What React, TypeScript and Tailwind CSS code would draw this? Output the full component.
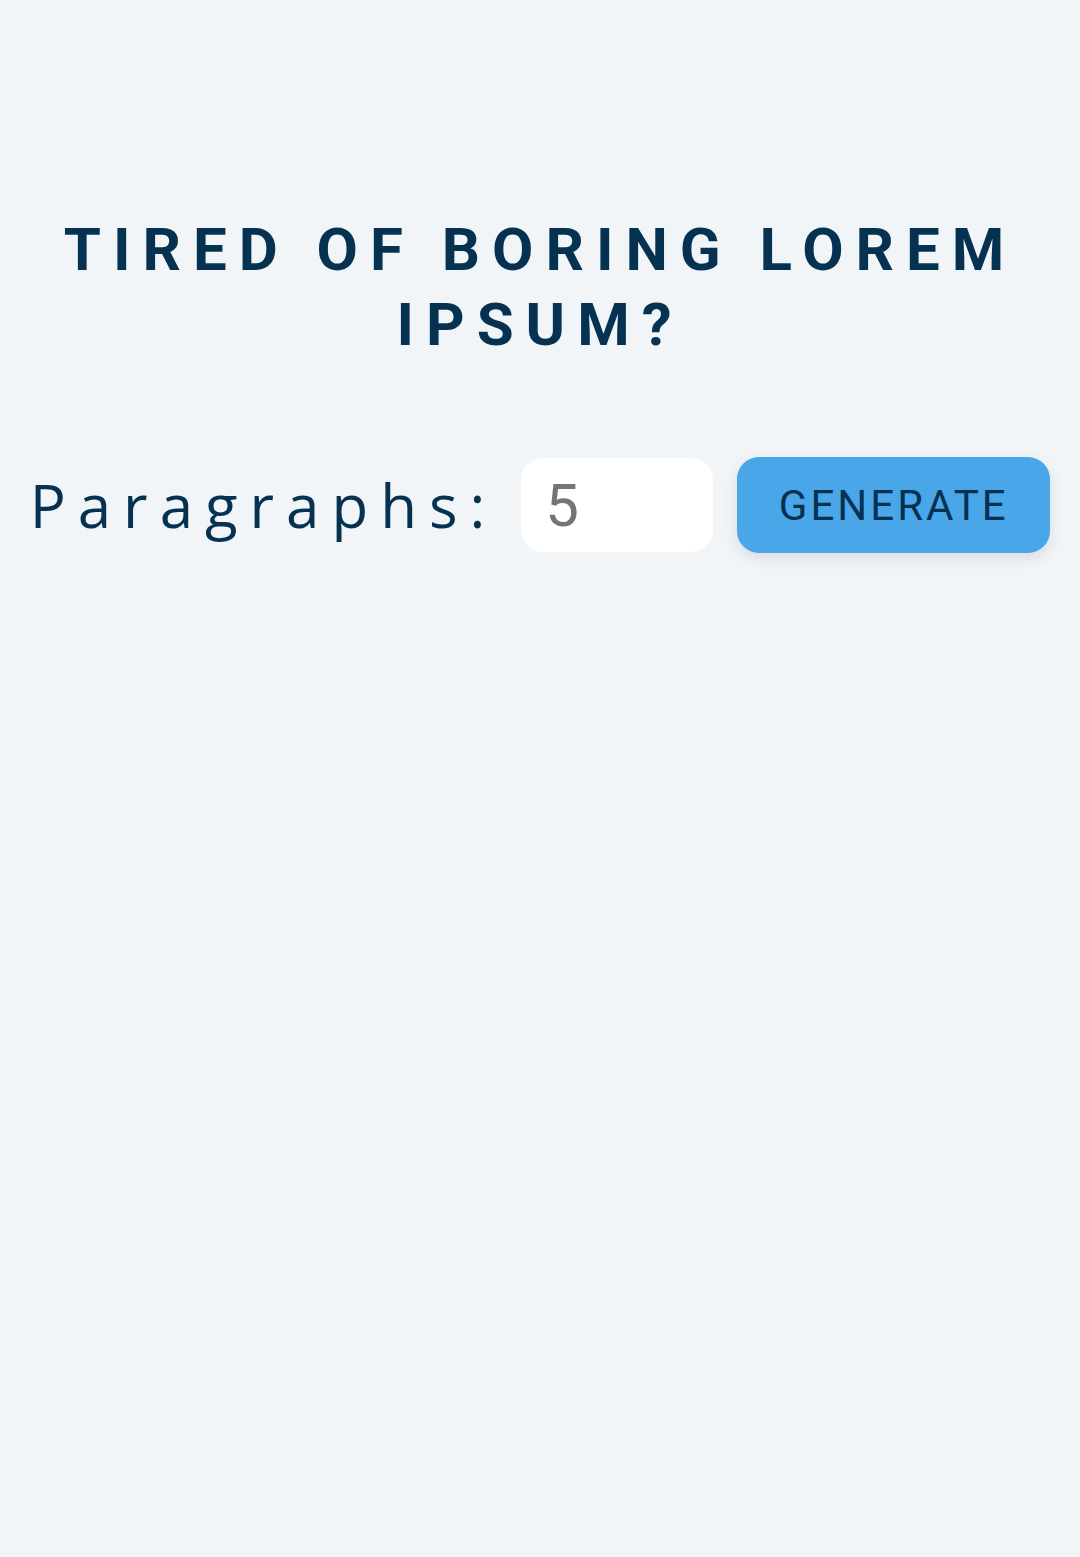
import React, { useState } from "react";

const App: React.FC = () => {
  const [count, setCount] = useState<number>(5);

  const handleSubmit = (e: React.FormEvent) => {
    e.preventDefault();
  };

  return (
    <main className="min-h-screen w-full bg-[#f1f5f8] pt-[212px]">
      <section className="mx-auto flex w-full flex-col items-center">
        <h3 className="w-[972px] text-center font-['Roboto','Liberation_Sans',sans-serif] text-[60px] font-bold uppercase leading-[75px] tracking-[12px] text-[#063251]">
          tired of boring lorem ipsum?
        </h3>
        <form
          onSubmit={handleSubmit}
          className="mt-[95px] flex w-full items-center justify-center"
        >
          <label
            htmlFor="amount"
            className="mr-[24px] font-['Open_Sans','Liberation_Sans',sans-serif] text-[60px] leading-[96px] tracking-[12px] text-[#063251]"
          >
            Paragraphs:
          </label>
          <input
            type="number"
            name="amount"
            id="amount"
            value={count}
            onChange={(e) => setCount(Number(e.target.value))}
            className="h-[94px] w-[192px] rounded-[22px] border-0 bg-white px-[24px] font-['Roboto','Liberation_Sans',sans-serif] text-[60px] text-[#757575] outline-none [appearance:textfield] [&::-webkit-inner-spin-button]:appearance-none"
          />
          <button
            type="submit"
            className="ml-[24px] h-[96px] w-[313px] rounded-[22px] bg-[#49a6e9] font-['Roboto','Liberation_Sans',sans-serif] text-[42px] uppercase tracking-[3px] text-[#063251] shadow-[0_5px_15px_rgba(0,0,0,0.1)]"
          >
            generate
          </button>
        </form>
      </section>
    </main>
  );
};

export default App;
